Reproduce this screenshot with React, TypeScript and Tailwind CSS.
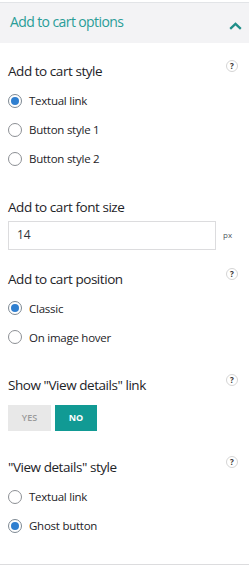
import React from "react";

const font = { fontFamily: '"Open Sans", "Noto Sans", sans-serif' };

function Help() {
  return (
    <span className="flex h-[12px] w-[12px] items-center justify-center rounded-full border border-[#d5d5d5] bg-white text-[8px] font-bold leading-none text-[#333]">
      ?
    </span>
  );
}

function Radio({ label, checked }: { label: string; checked?: boolean }) {
  return (
    <div className="flex h-[29px] items-center">
      <span
        className={
          "flex h-[14px] w-[14px] items-center justify-center rounded-full border bg-white " +
          (checked ? "border-[#7e8993]" : "border-[#8c8f94]")
        }
      >
        {checked && <span className="h-[8px] w-[8px] rounded-full bg-[#2f7fd0]" />}
      </span>
      <span className="ml-[7px] text-[11.5px] tracking-[-0.25px] text-[#1d2327]">{label}</span>
    </div>
  );
}

function Title({ text, help }: { text: string; help?: boolean }) {
  return (
    <div className="flex items-start justify-between pr-[3px]">
      <span className="text-[13.5px] tracking-[-0.45px] text-[#1d2327]">{text}</span>
      {help && (
        <span className="mt-[-1px]">
          <Help />
        </span>
      )}
    </div>
  );
}

export default function App() {
  return (
    <div className="h-[567px] w-[249px] bg-white" style={font}>
      <div className="h-[565px] border-b border-[#dcdcde]">
        <div className="h-[2px]" />
        <div className="flex h-[41px] items-center justify-between border-t border-[#e2e4e7] bg-[#f3f3f5] pl-[10px] pr-[7px]">
          <span className="mb-[3px] text-[14px] tracking-[-0.6px] text-[#2a9d98]">Add to cart options</span>
          <svg width="13" height="8" viewBox="0 0 13 8" className="mt-[6px]">
            <path d="M1.2 6.8 L6.5 1.8 L11.8 6.8" fill="none" stroke="#1f8e89" strokeWidth="2.3" />
          </svg>
        </div>
        <div className="px-[8px]">
          <div className="pt-[18px]">
            <Title text="Add to cart style" help />
          </div>
          <div className="mt-[5px]">
            <Radio label="Textual link" checked />
            <Radio label="Button style 1" />
            <Radio label="Button style 2" />
          </div>
          <div className="mt-[24px]">
            <Title text="Add to cart font size" />
          </div>
          <div className="mt-[3px] flex items-center">
            <div className="flex h-[29px] w-[208px] items-center border border-[#dcdcde] pl-[8px] text-[12px] text-[#2c3338]">
              14
            </div>
            <span className="ml-[7px] text-[8px] text-[#50575e]">px</span>
          </div>
          <div className="mt-[19px]">
            <Title text="Add to cart position" help />
          </div>
          <div className="mt-[5px]">
            <Radio label="Classic" checked />
            <Radio label="On image hover" />
          </div>
          <div className="mt-[23px]">
            <Title text={'Show "View details" link'} help />
          </div>
          <div className="mt-[10px] flex gap-[4px]">
            <div className="flex h-[26px] w-[43px] items-center justify-center bg-[#e8e8e8] text-[9px] font-semibold text-[#9a9a9a]">
              YES
            </div>
            <div className="flex h-[26px] w-[42px] items-center justify-center bg-[#119a94] text-[9px] font-bold text-white">
              NO
            </div>
          </div>
          <div className="mt-[26px]">
            <Title text={'"View details" style'} help />
          </div>
          <div className="mt-[5px]">
            <Radio label="Textual link" />
            <Radio label="Ghost button" checked />
          </div>
        </div>
      </div>
    </div>
  );
}
